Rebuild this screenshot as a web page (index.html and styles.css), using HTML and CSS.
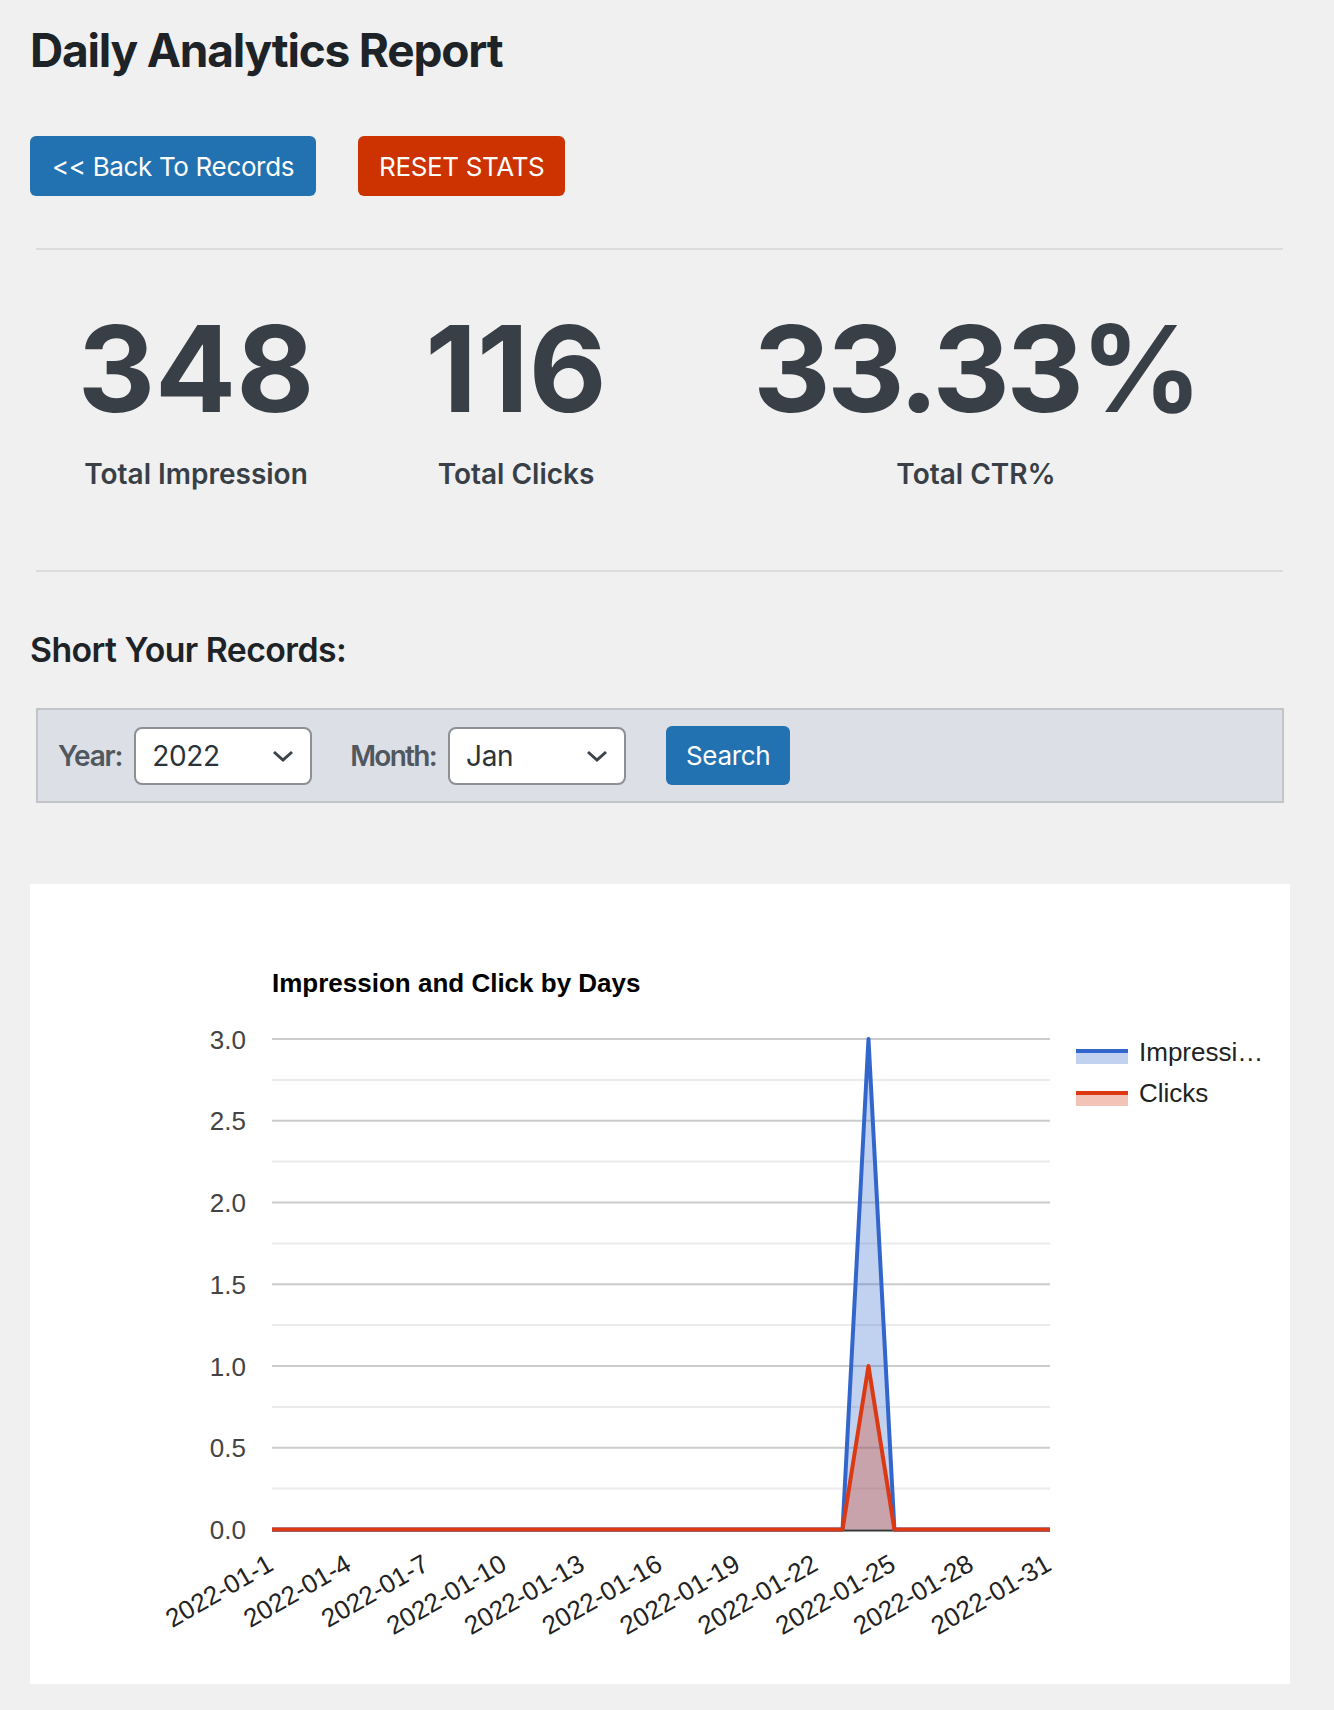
FILE: index.html
```html
<!DOCTYPE html>
<html lang="en">
<head>
<meta charset="utf-8">
<title>Daily Analytics Report</title>
<link rel="stylesheet" href="styles.css">
</head>
<body>
<div class="wrap">
  <h1 class="title">Daily Analytics Report</h1>
  <div class="actions">
    <a class="btn btn-blue">&lt;&lt; Back To Records</a>
    <a class="btn btn-red">RESET STATS</a>
  </div>
  <div class="sep sep-top"></div>
  <div class="stats">
    <div class="stat">
      <div class="stat-num">348</div>
      <div class="stat-label">Total Impression</div>
    </div>
    <div class="stat">
      <div class="stat-num">116</div>
      <div class="stat-label">Total Clicks</div>
    </div>
    <div class="stat">
      <div class="stat-num stat-num-tight">33.33%</div>
      <div class="stat-label">Total CTR%</div>
    </div>
  </div>
  <div class="sep sep-bottom"></div>
  <h2 class="subtitle">Short Your Records:</h2>
  <div class="filter">
    <span class="f-label">Year:</span>
    <div class="select"><span>2022</span><svg class="chev" width="22" height="12" viewBox="0 0 22 12"><path d="M2 2 L11 10 L20 2" fill="none" stroke="#3c434a" stroke-width="3"/></svg></div>
    <span class="f-label f-gap">Month:</span>
    <div class="select"><span>Jan</span><svg class="chev" width="22" height="12" viewBox="0 0 22 12"><path d="M2 2 L11 10 L20 2" fill="none" stroke="#3c434a" stroke-width="3"/></svg></div>
    <a class="btn btn-blue btn-search">Search</a>
  </div>
  <div class="chart">
    <svg class="chart-svg" width="1260" height="800" viewBox="0 0 1260 800">
      <text x="242" y="108" class="c-title">Impression and Click by Days</text>
      <g class="grid-minor">
        <line x1="242" x2="1020" y1="195.9" y2="195.9"/>
        <line x1="242" x2="1020" y1="277.6" y2="277.6"/>
        <line x1="242" x2="1020" y1="359.4" y2="359.4"/>
        <line x1="242" x2="1020" y1="441.1" y2="441.1"/>
        <line x1="242" x2="1020" y1="522.9" y2="522.9"/>
        <line x1="242" x2="1020" y1="604.6" y2="604.6"/>
      </g>
      <g class="grid-major">
        <line x1="242" x2="1020" y1="155" y2="155"/>
        <line x1="242" x2="1020" y1="236.75" y2="236.75"/>
        <line x1="242" x2="1020" y1="318.5" y2="318.5"/>
        <line x1="242" x2="1020" y1="400.25" y2="400.25"/>
        <line x1="242" x2="1020" y1="482" y2="482"/>
        <line x1="242" x2="1020" y1="563.75" y2="563.75"/>
      </g>
      <g class="y-labels">
        <text x="216" y="164.5">3.0</text>
        <text x="216" y="246.25">2.5</text>
        <text x="216" y="328">2.0</text>
        <text x="216" y="409.75">1.5</text>
        <text x="216" y="491.5">1.0</text>
        <text x="216" y="573.25">0.5</text>
        <text x="216" y="655">0.0</text>
      </g>
      <polygon points="242,645.5 812.53,645.5 838.47,155 864.4,645.5 1020,645.5" fill="#3366cc" fill-opacity="0.3"/>
      <polygon points="242,645.5 812.53,645.5 838.47,482 864.4,645.5 1020,645.5" fill="#dc3912" fill-opacity="0.3"/>
      <line x1="242" x2="1020" y1="646.5" y2="646.5" stroke="#333333" stroke-width="2"/>
      <polyline points="242,645.5 812.53,645.5 838.47,155 864.4,645.5 1020,645.5" fill="none" stroke="#3366cc" stroke-width="4" stroke-linejoin="round"/>
      <polyline points="242,645.5 812.53,645.5 838.47,482 864.4,645.5 1020,645.5" fill="none" stroke="#dc3912" stroke-width="4" stroke-linejoin="round"/>
      <g class="x-labels">
        <text x="245" y="685" transform="rotate(-30 245 685)">2022-01-1</text>
        <text x="322.8" y="685" transform="rotate(-30 322.8 685)">2022-01-4</text>
        <text x="400.6" y="685" transform="rotate(-30 400.6 685)">2022-01-7</text>
        <text x="478.4" y="685" transform="rotate(-30 478.4 685)">2022-01-10</text>
        <text x="556.2" y="685" transform="rotate(-30 556.2 685)">2022-01-13</text>
        <text x="634" y="685" transform="rotate(-30 634 685)">2022-01-16</text>
        <text x="711.8" y="685" transform="rotate(-30 711.8 685)">2022-01-19</text>
        <text x="789.6" y="685" transform="rotate(-30 789.6 685)">2022-01-22</text>
        <text x="867.4" y="685" transform="rotate(-30 867.4 685)">2022-01-25</text>
        <text x="945.2" y="685" transform="rotate(-30 945.2 685)">2022-01-28</text>
        <text x="1023" y="685" transform="rotate(-30 1023 685)">2022-01-31</text>
      </g>
      <g class="legend">
        <rect x="1046" y="165" width="52" height="4" fill="#3366cc"/>
        <rect x="1046" y="169" width="52" height="11" fill="#3366cc" fill-opacity="0.3"/>
        <text x="1109" y="176.7">Impressi…</text>
        <rect x="1046" y="207" width="52" height="4" fill="#dc3912"/>
        <rect x="1046" y="211" width="52" height="11" fill="#dc3912" fill-opacity="0.3"/>
        <text x="1109" y="217.7">Clicks</text>
      </g>
    </svg>
  </div>
</div>
</body>
</html>
```

FILE: styles.css
```css
body {
  margin: 0;
  background: #f0f0f1;
  font-family: Inter, "Noto Sans", sans-serif;
  color: #1d2327;
}

.wrap {
  padding: 22px 44px 26px 30px;
}

.title {
  margin: 0;
  font-size: 46px;
  line-height: 56px;
  font-weight: 700;
  letter-spacing: -1.2px;
  color: #1d2327;
}

.actions {
  display: flex;
  gap: 42px;
  margin-top: 58px;
}

.btn {
  display: inline-flex;
  align-items: center;
  height: 60px;
  box-sizing: border-box;
  padding: 0 22px;
  border-radius: 6px;
  font-size: 26px;
  letter-spacing: -0.35px;
  color: #ffffff;
  text-decoration: none;
}

.btn-blue {
  background: #2271b1;
}

.btn-red {
  background: #cc3300;
  padding: 0 21px;
}

.sep {
  height: 2px;
  background: #dcdcde;
  margin: 0 7px 0 6px;
}

.sep-top {
  margin-top: 52px;
}

.stats {
  display: grid;
  grid-template-columns: 320px 320px 600px;
  margin: 59px 6px 0;
  color: #383f46;
}

.stat {
  text-align: center;
}

.stat-num {
  font-size: 120px;
  line-height: 120px;
  font-weight: 700;
}

.stat-num-tight {
  letter-spacing: -3.5px;
}

.stat-label {
  margin-top: 28px;
  font-size: 28px;
  line-height: 34px;
  font-weight: 600;
}

.sep-bottom {
  margin-top: 79px;
}

.subtitle {
  margin: 57px 0 0;
  font-size: 33.8px;
  line-height: 41px;
  font-weight: 600;
  letter-spacing: -0.55px;
  color: #1d2327;
}

.filter {
  display: flex;
  align-items: center;
  height: 95px;
  box-sizing: border-box;
  margin: 38px 6px 0;
  padding-left: 20px;
  border: 2px solid #c3c4c7;
  background: #dcdfe6;
}

.f-label {
  font-size: 28px;
  font-weight: 600;
  letter-spacing: -1.2px;
  color: #50575e;
  margin-right: 12px;
}

.f-gap {
  margin-left: 38px;
  letter-spacing: -1.7px;
}

.select {
  display: flex;
  align-items: center;
  justify-content: space-between;
  width: 178px;
  height: 58px;
  box-sizing: border-box;
  padding: 0 16px;
  border: 2px solid #8c8f94;
  border-radius: 8px;
  background: #ffffff;
  font-size: 28px;
  letter-spacing: -0.3px;
  color: #2c3338;
}

.chev {
  display: block;
}

.btn-search {
  height: 59px;
  padding: 0 20px;
  margin-left: 40px;
}

.chart {
  margin-top: 81px;
  background: #ffffff;
  height: 800px;
}

.chart-svg {
  display: block;
  font-family: "Liberation Sans", Arial, sans-serif;
}

.c-title {
  font-size: 26px;
  font-weight: 700;
  fill: #000000;
}

.grid-minor line {
  stroke: #ebebeb;
  stroke-width: 2;
}

.grid-major line {
  stroke: #cccccc;
  stroke-width: 2;
}

.y-labels text {
  font-size: 26px;
  fill: #444444;
  text-anchor: end;
}

.x-labels text {
  font-size: 26px;
  fill: #222222;
  text-anchor: end;
}

.legend text {
  font-size: 26px;
  fill: #222222;
}
```
